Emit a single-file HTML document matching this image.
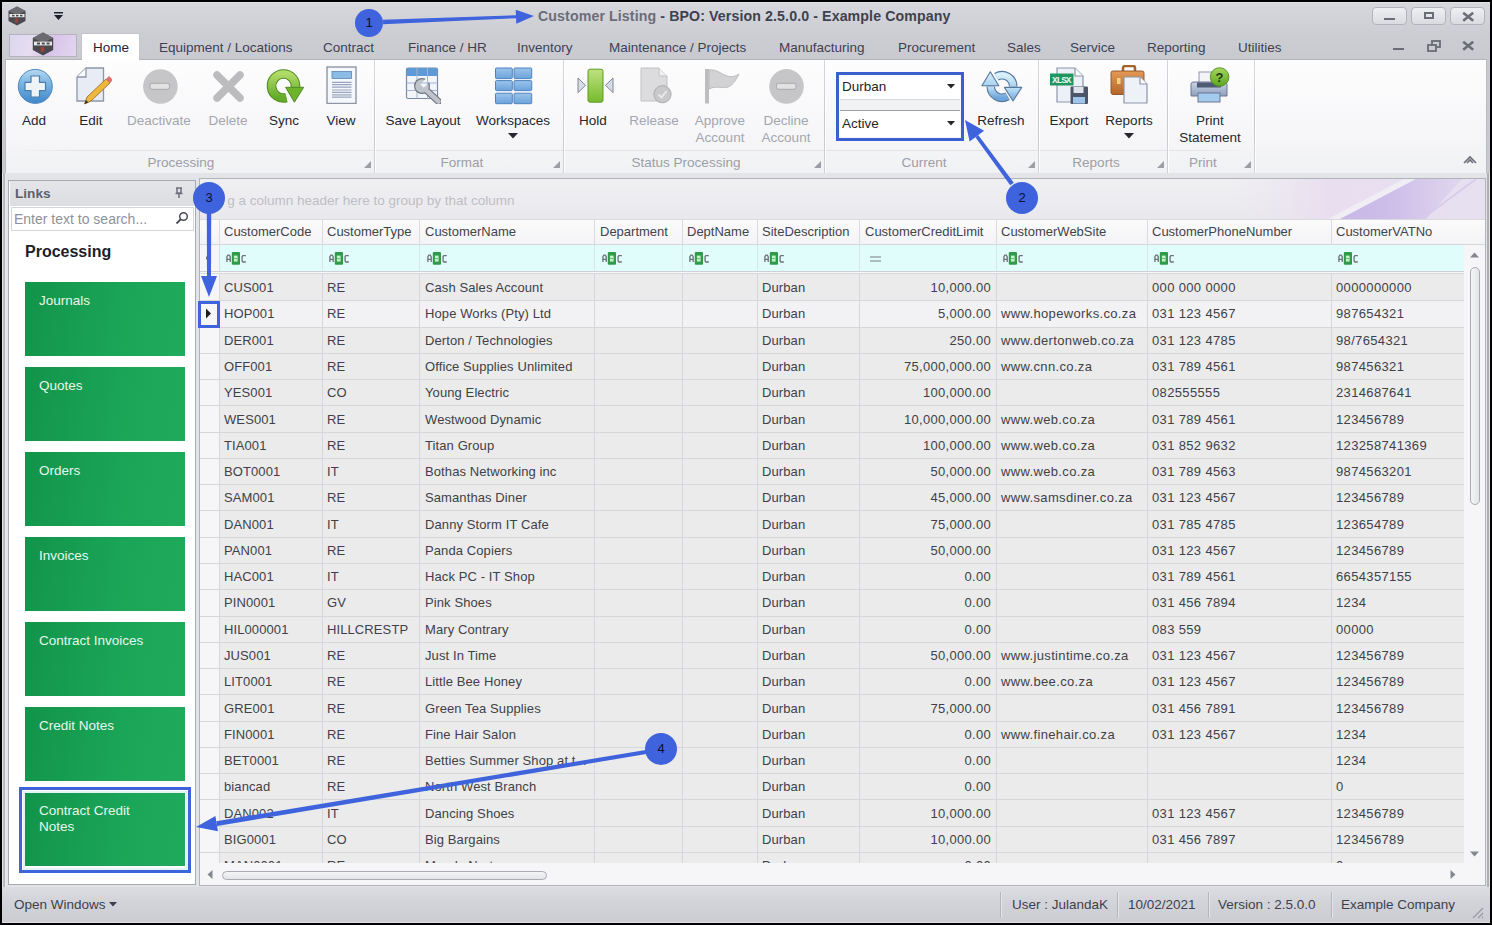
<!DOCTYPE html><html><head><meta charset="utf-8"><style>
*{margin:0;padding:0;box-sizing:border-box}
html,body{width:1492px;height:925px;overflow:hidden;background:#000;font-family:"Liberation Sans",sans-serif}
div,span,svg{position:absolute}
.t{white-space:nowrap;line-height:1}
.tab{top:41px;font-size:13.5px;color:#3d4152}
.rl{font-size:13.5px;color:#25272f;text-align:center;line-height:17px;white-space:nowrap}
.dis{color:#a3a6b0}
.gl{top:156px;font-size:13.5px;color:#9c9ea7;white-space:nowrap;line-height:1}
.gsep{top:60px;width:1px;height:113px;background:linear-gradient(#d5d6db,#c8c9cf 50%,#d0d1d6);box-shadow:1px 0 0 #fff}
.tile{left:25px;width:160px;height:74px;background:linear-gradient(100deg,#12944a,#1aa457 55%,#20ab5c);color:#e8f7ec;font-size:13.5px;padding:11px 0 0 14px;line-height:16px}
.c{font-size:13px;color:#404148;white-space:nowrap;line-height:1}
.hc{font-size:13px;color:#42434c;white-space:nowrap;line-height:1}
.sb{font-size:13.5px;color:#3c3f4e;white-space:nowrap;line-height:1}
</style></head><body>
<div style="left:2px;top:2px;width:1488px;height:921px;background:linear-gradient(#d7d8dd,#cdced4 30px,#c9cad0 56px,#c9cad0)"></div>
<div style="left:2px;top:2px;width:1488px;height:1px;background:#e4e5e8"></div>
<svg style="left:7px;top:6px" width="20" height="20" viewBox="0 0 20 20"><polygon points="10,0.5 18.5,5 18.5,15 10,19.5 1.5,15 1.5,5" fill="#4a4a4e"/><polygon points="10,0.5 18.5,5 10,9 1.5,5" fill="#6c6c70"/><rect x="2.5" y="8" width="15" height="3.2" fill="#e8e8e8"/><rect x="5" y="8.8" width="2.5" height="1.6" fill="#4a4a4e"/><rect x="9" y="8.8" width="2.5" height="1.6" fill="#4a4a4e"/><rect x="13" y="8.8" width="2.5" height="1.6" fill="#4a4a4e"/><rect x="8" y="12.5" width="3" height="4" fill="#a0413a"/></svg>
<svg style="left:53px;top:12px" width="12" height="9"><rect x="1" y="0" width="9" height="1.5" fill="#1e2030"/><polygon points="1,3 10,3 5.5,8" fill="#1e2030"/></svg>
<div class="t" style="left:538px;top:9px;font-size:14.2px;font-weight:bold;color:#3e4150;letter-spacing:0.1px"><span style="position:static;color:#6b6d78">Customer Listing</span> - BPO: Version 2.5.0.0 - Example Company</div>
<div style="left:1372px;top:7px;width:35px;height:18px;border:1px solid #b3b4bb;border-radius:4px;background:linear-gradient(#eeeff2,#dadbe0)"><div style="left:11px;top:10px;width:11px;height:2.2px;background:#6b6d76"></div></div>
<div style="left:1411px;top:7px;width:35px;height:18px;border:1px solid #b3b4bb;border-radius:4px;background:linear-gradient(#eeeff2,#dadbe0)"><div style="left:11.5px;top:3.8px;width:10.5px;height:7.6px;border:2px solid #6b6d76"></div></div>
<div style="left:1450px;top:7px;width:35px;height:18px;border:1px solid #b3b4bb;border-radius:4px;background:linear-gradient(#eeeff2,#dadbe0)"><svg style="left:11px;top:3.5px" width="13" height="10"><path d="M1.2 0.8 L11.2 8.7 M11.2 0.8 L1.2 8.7" stroke="#6b6d76" stroke-width="2.6"/></svg></div>
<div style="left:9px;top:34px;width:68px;height:23px;border:1px solid #b5b3c0;background:linear-gradient(110deg,#dcd6ee,#e6ddf0 35%,#d9c3ea 60%,#e2d6ef)"></div>
<svg style="left:31px;top:32px" width="24" height="24" viewBox="0 0 20 20"><polygon points="10,0.5 18.5,5 18.5,15 10,19.5 1.5,15 1.5,5" fill="#4a4a4e"/><polygon points="10,0.5 18.5,5 10,9 1.5,5" fill="#6c6c70"/><rect x="2.5" y="8" width="15" height="3.2" fill="#e8e8e8"/><rect x="5" y="8.8" width="2.5" height="1.6" fill="#4a4a4e"/><rect x="9" y="8.8" width="2.5" height="1.6" fill="#4a4a4e"/><rect x="13" y="8.8" width="2.5" height="1.6" fill="#4a4a4e"/><rect x="8" y="12.5" width="3" height="4" fill="#a0413a"/></svg>
<div style="left:81px;top:33px;width:59px;height:28px;background:#fff;border:1px solid #c4c5cb;border-bottom:none;border-radius:2px 2px 0 0"></div>
<div class="t tab" style="left:93px;color:#1f2233">Home</div>
<div class="t tab" style="left:159px">Equipment / Locations</div>
<div class="t tab" style="left:323px">Contract</div>
<div class="t tab" style="left:408px">Finance / HR</div>
<div class="t tab" style="left:517px">Inventory</div>
<div class="t tab" style="left:609px">Maintenance / Projects</div>
<div class="t tab" style="left:779px">Manufacturing</div>
<div class="t tab" style="left:898px">Procurement</div>
<div class="t tab" style="left:1007px">Sales</div>
<div class="t tab" style="left:1070px">Service</div>
<div class="t tab" style="left:1147px">Reporting</div>
<div class="t tab" style="left:1238px">Utilities</div>
<div style="left:1393px;top:47.5px;width:11px;height:2.2px;background:#6b6d76"></div>
<svg style="left:1427px;top:40px" width="14" height="12"><rect x="5" y="1" width="8" height="6" fill="none" stroke="#6b6d76" stroke-width="1.8"/><rect x="1" y="5" width="8" height="6" fill="#cbccd2" stroke="#6b6d76" stroke-width="1.8"/></svg>
<svg style="left:1462px;top:41px" width="13" height="10"><path d="M1.2 0.8 L11.2 8.7 M11.2 0.8 L1.2 8.7" stroke="#6b6d76" stroke-width="2.6"/></svg>
<div style="left:5px;top:59px;width:1482px;height:115px;background:linear-gradient(#fdfdfe,#f6f6f8 70%,#f0f1f3);border:1px solid #b9bac0;border-bottom:1.5px solid #a6a7ac;border-top-color:#b4b5bb"></div>
<div style="left:14px;top:150px;width:1240px;height:1px;background:linear-gradient(90deg,rgba(220,221,226,0),#e2e3e7 5%,#e2e3e7 95%,rgba(220,221,226,0))"></div>
<div style="left:82px;top:57px;width:57px;height:4px;background:#fff"></div>
<div class="gsep" style="left:374px"></div>
<div class="gsep" style="left:563px"></div>
<div class="gsep" style="left:824px"></div>
<div class="gsep" style="left:1038px"></div>
<div class="gsep" style="left:1167px"></div>
<div class="gsep" style="left:1254px"></div>
<div class="gl" style="left:81px;width:200px;text-align:center">Processing</div>
<div class="gl" style="left:362px;width:200px;text-align:center">Format</div>
<div class="gl" style="left:586px;width:200px;text-align:center">Status Processing</div>
<div class="gl" style="left:824px;width:200px;text-align:center">Current</div>
<div class="gl" style="left:996px;width:200px;text-align:center">Reports</div>
<div class="gl" style="left:1103px;width:200px;text-align:center">Print</div>
<svg style="left:364px;top:161px" width="8" height="8"><polygon points="7,0 7,7 0,7" fill="#9c9ea6"/></svg>
<svg style="left:553px;top:161px" width="8" height="8"><polygon points="7,0 7,7 0,7" fill="#9c9ea6"/></svg>
<svg style="left:814px;top:161px" width="8" height="8"><polygon points="7,0 7,7 0,7" fill="#9c9ea6"/></svg>
<svg style="left:1028px;top:161px" width="8" height="8"><polygon points="7,0 7,7 0,7" fill="#9c9ea6"/></svg>
<svg style="left:1157px;top:161px" width="8" height="8"><polygon points="7,0 7,7 0,7" fill="#9c9ea6"/></svg>
<svg style="left:1244px;top:161px" width="8" height="8"><polygon points="7,0 7,7 0,7" fill="#9c9ea6"/></svg>
<svg style="left:1462px;top:153px" width="16" height="12"><path d="M2 10 L8 4 L14 10 M5 10 L8 7 L11 10" stroke="#6a6c76" stroke-width="1.6" fill="none"/></svg>
<div class="rl" style="left:-26px;top:112px;width:120px">Add</div>
<div class="rl" style="left:31px;top:112px;width:120px">Edit</div>
<div class="rl dis" style="left:99px;top:112px;width:120px">Deactivate</div>
<div class="rl dis" style="left:168px;top:112px;width:120px">Delete</div>
<div class="rl" style="left:224px;top:112px;width:120px">Sync</div>
<div class="rl" style="left:281px;top:112px;width:120px">View</div>
<div class="rl" style="left:363px;top:112px;width:120px">Save Layout</div>
<div class="rl" style="left:453px;top:112px;width:120px">Workspaces</div>
<div class="rl" style="left:533px;top:112px;width:120px">Hold</div>
<div class="rl dis" style="left:594px;top:112px;width:120px">Release</div>
<div class="rl dis" style="left:660px;top:112px;width:120px">Approve<br>Account</div>
<div class="rl dis" style="left:726px;top:112px;width:120px">Decline<br>Account</div>
<div class="rl" style="left:941px;top:112px;width:120px">Refresh</div>
<div class="rl" style="left:1009px;top:112px;width:120px">Export</div>
<div class="rl" style="left:1069px;top:112px;width:120px">Reports</div>
<div class="rl" style="left:1150px;top:112px;width:120px">Print<br>Statement</div>
<svg style="left:508px;top:132.5px" width="10" height="6"><polygon points="0,0 10,0 5,5.5" fill="#25272f"/></svg>
<svg style="left:1124px;top:132.5px" width="10" height="6"><polygon points="0,0 10,0 5,5.5" fill="#25272f"/></svg>
<svg style="left:17px;top:68px" width="37" height="37" viewBox="0 0 37 37"><defs><linearGradient id="gAdd" x1="0" y1="0" x2="0" y2="1"><stop offset="0" stop-color="#b6d8ef"/><stop offset="0.5" stop-color="#6eaee0"/><stop offset="1" stop-color="#3f86c8"/></linearGradient></defs><circle cx="18.3" cy="18.4" r="17" fill="url(#gAdd)" stroke="#4f86bd" stroke-width="1"/><path d="M14 8 H22.5 V14.3 H28.5 V22.7 H22.5 V29 H14 V22.7 H8 V14.3 H14 Z" fill="#eef3f8" stroke="#4a7cae" stroke-width="1.2" stroke-linejoin="round"/></svg>
<svg style="left:75px;top:66px" width="37" height="40" viewBox="0 0 37 40"><path d="M2 11 L11 2 H28.5 V35 H2 Z" fill="#e7ecf5" stroke="#8d95a8" stroke-width="1.3"/><path d="M2 11 H11 V2" fill="#fbfcfe" stroke="#8d95a8" stroke-width="1.3"/><path d="M9.5 38 L12 31 L31 13 L35 17 L16 35 Z" fill="#f1b73c" stroke="#8a6a2a" stroke-width="0.8"/><path d="M31 13 L34 10 L38 14 L35 17 Z" fill="#e2706e"/><path d="M9.5 38 L11 34 L13.5 36.5 Z" fill="#333"/></svg>
<svg style="left:142px;top:68px" width="37" height="37" viewBox="0 0 37 37"><circle cx="18.4" cy="18.5" r="17.3" fill="#c6c6c8"/><rect x="8" y="15.3" width="19.5" height="6" rx="2" fill="#e2e2e3" stroke="#a9a9ab" stroke-width="1"/></svg>
<svg style="left:212px;top:70px" width="34" height="34" viewBox="0 0 34 34"><path d="M5 5 L28 28 M28 5 L5 28" stroke="#bcbcbe" stroke-width="7.5" stroke-linecap="round"/></svg>
<svg style="left:265px;top:68px" width="40" height="37" viewBox="0 0 40 37"><defs><linearGradient id="gSync" x1="0" y1="0" x2="0" y2="1"><stop offset="0" stop-color="#b0db66"/><stop offset="1" stop-color="#62aa28"/></linearGradient></defs><path d="M21.4 29.6 A12 12 0 1 1 30.4 19.5" fill="none" stroke="#4f8a22" stroke-width="9.6"/><path d="M21.4 29.6 A12 12 0 1 1 30.4 19.5" fill="none" stroke="url(#gSync)" stroke-width="7.6"/><polygon points="20.6,19.3 38.7,19.3 29.4,34.2" fill="#6db42c" stroke="#4f8a22" stroke-width="1" stroke-linejoin="round"/></svg>
<svg style="left:326px;top:66px" width="31" height="38" viewBox="0 0 31 38"><rect x="1" y="1" width="29" height="36.5" fill="#f4f7fb" stroke="#8e96a6" stroke-width="1.4"/><rect x="6" y="5.5" width="19.5" height="7" fill="#8cbce6" stroke="#5a86b6" stroke-width="0.8"/><path d="M6 16.3 H25.5 M6 18.7 H25.5 M6 21.1 H25.5 M6 24 H25.5 M6 26.4 H25.5 M6 28.8 H25.5 M6 31.2 H25.5" stroke="#98a3bd" stroke-width="1.2"/></svg>
<svg style="left:405px;top:67px" width="40" height="40" viewBox="0 0 40 40"><defs><mask id="mWr"><rect x="0" y="0" width="40" height="40" fill="#fff"/><polygon points="15.2,17.2 18.8,20.8 27,12.6 23.4,9" fill="#000"/></mask></defs><rect x="1.5" y="1" width="31" height="30.5" rx="1.5" fill="#f2f6fb" stroke="#7d8aa5" stroke-width="1.2"/><rect x="1.5" y="1" width="31" height="8" rx="1.5" fill="#5d9ad6"/><path d="M12 1 V31.5 M22.5 1 V31.5 M1.5 16 H32.5 M1.5 23.5 H32.5" stroke="#a3b4cc" stroke-width="1"/><g mask="url(#mWr)"><path d="M19 21 L33.5 34.5" stroke="#6f7480" stroke-width="7" stroke-linecap="round"/><circle cx="17" cy="19" r="8" fill="#6f7480"/><path d="M19 21 L33.5 34.5" stroke="#bfc4cc" stroke-width="4.6" stroke-linecap="round"/><circle cx="17" cy="19" r="6.8" fill="#bfc4cc"/></g></svg>
<svg style="left:494px;top:67px" width="39" height="38" viewBox="0 0 39 38"><defs><linearGradient id="gWs" x1="0" y1="0" x2="0" y2="1"><stop offset="0" stop-color="#9cc4ea"/><stop offset="1" stop-color="#6aa3dc"/></linearGradient></defs><rect x="1.5" y="1.0" width="16.8" height="10.6" rx="1" fill="url(#gWs)" stroke="#4d83bd" stroke-width="1"/><rect x="20.0" y="1.0" width="17.7" height="10.6" rx="1" fill="url(#gWs)" stroke="#4d83bd" stroke-width="1"/><rect x="1.5" y="13.6" width="16.8" height="10.0" rx="1" fill="url(#gWs)" stroke="#4d83bd" stroke-width="1"/><rect x="20.0" y="13.6" width="17.7" height="10.0" rx="1" fill="url(#gWs)" stroke="#4d83bd" stroke-width="1"/><rect x="1.5" y="26.2" width="16.8" height="10.5" rx="1" fill="url(#gWs)" stroke="#4d83bd" stroke-width="1"/><rect x="20.0" y="26.2" width="17.7" height="10.5" rx="1" fill="url(#gWs)" stroke="#4d83bd" stroke-width="1"/></svg>
<svg style="left:576px;top:68px" width="39" height="36" viewBox="0 0 39 36"><defs><linearGradient id="gHold" x1="0" y1="0" x2="0" y2="1"><stop offset="0" stop-color="#bde27e"/><stop offset="1" stop-color="#78ba2e"/></linearGradient></defs><rect x="12" y="1.2" width="15" height="33" rx="2" fill="url(#gHold)" stroke="#5f9a24" stroke-width="1"/><polygon points="2,10 9.5,17.3 2,24.6" fill="#d7dce6" stroke="#7c8699" stroke-width="1"/><polygon points="37,10 29.5,17.3 37,24.6" fill="#d7dce6" stroke="#7c8699" stroke-width="1"/></svg>
<svg style="left:640px;top:67px" width="36" height="37" viewBox="0 0 36 37"><path d="M1 1 H19 L27 9 V34 H1 Z" fill="#dcdcde" stroke="#c2c2c4" stroke-width="1"/><path d="M19 1 V9 H27" fill="#f0f0f1" stroke="#c2c2c4" stroke-width="1"/><circle cx="22.5" cy="27.2" r="8.6" fill="#c8c8ca" stroke="#adadaf" stroke-width="1"/><path d="M18.5 27.5 L21.5 30.5 L26.5 24" stroke="#e8e8e9" stroke-width="2" fill="none"/></svg>
<svg style="left:703px;top:68px" width="38" height="37" viewBox="0 0 38 37"><rect x="2" y="1" width="4" height="34.5" fill="#bdbdbf"/><path d="M6 2 C14 1 18 6 24 8 C29 9.5 33 8 36 6 C33 12 30 17 25 19 C19 21 14 17 6 21 Z" fill="#d2d2d4" stroke="#bdbdbf" stroke-width="1"/></svg>
<svg style="left:768px;top:68px" width="37" height="37" viewBox="0 0 37 37"><circle cx="18.5" cy="18.4" r="17.3" fill="#c6c6c8"/><rect x="8.5" y="15.3" width="19.5" height="6" rx="2" fill="#e2e2e3" stroke="#a9a9ab" stroke-width="1"/></svg>
<svg style="left:980px;top:70px" width="44" height="34" viewBox="0 0 44 34"><defs><linearGradient id="gRf" x1="0" y1="0" x2="0" y2="1"><stop offset="0" stop-color="#d8f0fb"/><stop offset="1" stop-color="#a9d2f0"/></linearGradient><linearGradient id="gRf2" x1="0" y1="0" x2="0" y2="1"><stop offset="0" stop-color="#c2e2f7"/><stop offset="1" stop-color="#6ea6dc"/></linearGradient></defs><path d="M16.4 6.8 A11.2 11.2 0 0 1 33.2 16.5" fill="none" stroke="#56789c" stroke-width="8.6"/><path d="M10.8 16.5 A11.2 11.2 0 0 0 27.6 26.2" fill="none" stroke="#56789c" stroke-width="8.6"/><path d="M16.4 6.8 A11.2 11.2 0 0 1 33.2 16.5" fill="none" stroke="url(#gRf)" stroke-width="6.4"/><path d="M10.8 16.5 A11.2 11.2 0 0 0 27.6 26.2" fill="none" stroke="url(#gRf2)" stroke-width="6.4"/><polygon points="24.4,17.4 41.7,17.4 33,31" fill="url(#gRf2)" stroke="#56789c" stroke-width="1.1" stroke-linejoin="round"/><polygon points="1.9,15.7 18.8,15.7 10.3,1.8" fill="url(#gRf)" stroke="#56789c" stroke-width="1.1" stroke-linejoin="round"/></svg>
<svg style="left:1048px;top:66px" width="42" height="39" viewBox="0 0 42 39"><path d="M9 2 H27 L35 10 V36 H9 Z" fill="#edf1f7" stroke="#8d95a8" stroke-width="1.2"/><path d="M27 2 V10 H35" fill="#fafbfd" stroke="#8d95a8" stroke-width="1.2"/><rect x="2" y="7.5" width="23.5" height="12" fill="#1f9560"/><text x="4" y="17" font-family="Liberation Mono" font-size="9.5" font-weight="bold" fill="#e9f6ee" textLength="19.5">XLSX</text><rect x="22.5" y="20.5" width="17.5" height="17.5" rx="1" fill="#4d5668"/><rect x="25.5" y="21" width="10" height="6" fill="#dfe4ec"/><rect x="25" y="31" width="12" height="6.5" fill="#9fc6ea"/></svg>
<svg style="left:1109px;top:65px" width="40" height="40" viewBox="0 0 40 40"><defs><linearGradient id="gBc" x1="0" y1="0" x2="0" y2="1"><stop offset="0" stop-color="#e39a55"/><stop offset="1" stop-color="#b5662b"/></linearGradient></defs><path d="M14 6 V3 A2 2 0 0 1 16 1 H24 A2 2 0 0 1 26 3 V6" fill="none" stroke="#a5622b" stroke-width="2.5"/><rect x="2" y="6" width="33" height="23.5" rx="2" fill="url(#gBc)" stroke="#8c5024" stroke-width="0.9"/><rect x="8" y="13" width="3.5" height="6" fill="#f1d27a"/><path d="M15 12 H31 L38 19 V38 H15 Z" fill="#eef1f7" stroke="#8d95a8" stroke-width="1.2"/><path d="M31 12 V19 H38" fill="#fafbfd" stroke="#8d95a8" stroke-width="1.2"/></svg>
<svg style="left:1190px;top:66px" width="40" height="40" viewBox="0 0 40 40"><defs><linearGradient id="gPr" x1="0" y1="0" x2="0" y2="1"><stop offset="0" stop-color="#c9d4e6"/><stop offset="1" stop-color="#8e9fbd"/></linearGradient><linearGradient id="gQ" x1="0" y1="0" x2="0" y2="1"><stop offset="0" stop-color="#a6d65c"/><stop offset="1" stop-color="#5ea624"/></linearGradient></defs><rect x="9" y="6" width="20" height="14" fill="#f2f4f8" stroke="#8d95a8" stroke-width="1"/><path d="M3 16 H35 A2.5 2.5 0 0 1 37 18.5 V30 H1 V18.5 A2.5 2.5 0 0 1 3 16 Z" fill="url(#gPr)" stroke="#6c7791" stroke-width="1"/><rect x="7" y="16.5" width="24" height="5" fill="#4f5b72"/><rect x="8" y="27" width="22" height="9" fill="#a3cbee" stroke="#6c7791" stroke-width="1"/><circle cx="29.6" cy="11" r="9.3" fill="url(#gQ)" stroke="#4e8d1f" stroke-width="0.9"/><text x="29.6" y="15.5" text-anchor="middle" font-family="Liberation Sans" font-size="13" font-weight="bold" fill="#223311">?</text></svg>
<div style="left:836px;top:72px;width:128px;height:69px;border:3.5px solid #3b5fcf"></div>
<div style="left:840px;top:76px;width:120px;height:24px;background:#fff;border-bottom:1px solid #d9dadf"></div>
<div style="left:840px;top:100px;width:120px;height:10px;background:#f1f2f4"></div>
<div style="left:840px;top:110px;width:120px;height:27px;background:#fff;border-top:1.5px solid #9d9fa6"></div>
<div class="t" style="left:842px;top:80px;font-size:13.5px;color:#23252d">Durban</div>
<div class="t" style="left:842px;top:117px;font-size:13.5px;color:#23252d">Active</div>
<svg style="left:947px;top:84px" width="9" height="5"><polygon points="0,0 8,0 4,4.5" fill="#23252d"/></svg>
<svg style="left:947px;top:121px" width="9" height="5"><polygon points="0,0 8,0 4,4.5" fill="#23252d"/></svg>
<div style="left:2px;top:173px;width:1488px;height:714px;background:#e3e4e8"></div>
<div style="left:3px;top:173px;width:1.5px;height:714px;background:#b9babf"></div>
<div style="left:1487px;top:173px;width:1.5px;height:714px;background:#aeafb4"></div>
<div style="left:8px;top:180px;width:188px;height:705px;background:#fff;border:1px solid #a9aaaf"></div>
<div style="left:10px;top:181px;width:185px;height:25px;background:linear-gradient(#e4e5e9,#dcdde1)"></div>
<div class="t" style="left:15px;top:187px;font-size:13.6px;font-weight:bold;color:#5d606c">Links</div>
<svg style="left:174px;top:187px" width="10" height="12"><path d="M2 1 H8 M3 1 V6 H7 V1 M1.5 6.5 H8.5 M5 6.5 V11" stroke="#6d6f7a" stroke-width="1.5" fill="none"/></svg>
<div style="left:11px;top:207px;width:183px;height:24px;background:#fff;border:1px solid #d4d5da"></div>
<div class="t" style="left:14px;top:212px;font-size:14px;color:#8f919a">Enter text to search...</div>
<svg style="left:175px;top:211px" width="14" height="14"><circle cx="8.5" cy="5.5" r="3.8" stroke="#4a4c56" stroke-width="1.5" fill="none"/><path d="M6 8 L1.5 12.5" stroke="#4a4c56" stroke-width="1.8"/></svg>
<div class="t" style="left:25px;top:244px;font-size:16px;font-weight:bold;color:#1d1f2a">Processing</div>
<div class="tile" style="top:282px">Journals</div>
<div class="tile" style="top:367px">Quotes</div>
<div class="tile" style="top:452px">Orders</div>
<div class="tile" style="top:537px">Invoices</div>
<div class="tile" style="top:622px">Contract Invoices</div>
<div class="tile" style="top:707px">Credit Notes</div>
<div class="tile" style="top:792px">Contract Credit<br>Notes</div>
<div style="left:199px;top:178px;width:1287px;height:708px;background:#f5f5f7;border:1px solid #b2b3b9"></div>
<div style="left:200px;top:179px;width:1285px;height:40px;background:linear-gradient(#f0f0f3,#e9e9ed)"></div>
<svg style="left:1200px;top:179px" width="285" height="40" viewBox="0 0 285 40"><defs><linearGradient id="pg" x1="0" y1="0" x2="285" y2="0" gradientUnits="userSpaceOnUse"><stop offset="0.1" stop-color="#ebe6f0" stop-opacity="0"/><stop offset="0.45" stop-color="#e9def0"/><stop offset="1" stop-color="#e6e0f0"/></linearGradient><linearGradient id="pb" x1="140" y1="0" x2="262" y2="0" gradientUnits="userSpaceOnUse"><stop offset="0" stop-color="#c8b7e6"/><stop offset="0.4" stop-color="#cdbde9"/><stop offset="1" stop-color="#e0d7ee"/></linearGradient></defs><rect x="0" y="0" width="285" height="40" fill="url(#pg)"/><polygon points="128,40 204,0 216,0 140,40" fill="#f0eef4"/><polygon points="140,40 216,0 262,0 226,40" fill="url(#pb)"/><path d="M222 40 L276 0" stroke="#d6cbea" stroke-width="1.6"/></svg>
<div class="t" style="left:227.2px;top:193.5px;font-size:13.5px;color:#bdbec5">g a column header here to group by that column</div>
<div style="left:200px;top:219px;width:1285px;height:26px;background:linear-gradient(#fbfbfc,#f4f4f6);border-top:1px solid #d9dade;border-bottom:1px solid #d6d7dc"></div>
<div style="left:219px;top:220px;width:1px;height:25px;background:#dadbe0"></div>
<div style="left:322px;top:220px;width:1px;height:25px;background:#dadbe0"></div>
<div style="left:419px;top:220px;width:1px;height:25px;background:#dadbe0"></div>
<div style="left:594px;top:220px;width:1px;height:25px;background:#dadbe0"></div>
<div style="left:682px;top:220px;width:1px;height:25px;background:#dadbe0"></div>
<div style="left:757px;top:220px;width:1px;height:25px;background:#dadbe0"></div>
<div style="left:859px;top:220px;width:1px;height:25px;background:#dadbe0"></div>
<div style="left:996px;top:220px;width:1px;height:25px;background:#dadbe0"></div>
<div style="left:1147px;top:220px;width:1px;height:25px;background:#dadbe0"></div>
<div style="left:1331px;top:220px;width:1px;height:25px;background:#dadbe0"></div>
<div class="t hc" style="left:224px;top:225.2px">CustomerCode</div>
<div class="t hc" style="left:327px;top:225.2px">CustomerType</div>
<div class="t hc" style="left:425px;top:225.2px">CustomerName</div>
<div class="t hc" style="left:600px;top:225.2px">Department</div>
<div class="t hc" style="left:687px;top:225.2px">DeptName</div>
<div class="t hc" style="left:762px;top:225.2px">SiteDescription</div>
<div class="t hc" style="left:865px;top:225.2px">CustomerCreditLimit</div>
<div class="t hc" style="left:1001px;top:225.2px">CustomerWebSite</div>
<div class="t hc" style="left:1152px;top:225.2px">CustomerPhoneNumber</div>
<div class="t hc" style="left:1336px;top:225.2px">CustomerVATNo</div>
<div style="left:200px;top:245px;width:1264px;height:26px;background:#e0fcfb"></div>
<div style="left:200px;top:245px;width:19px;height:26px;background:#f6f6f8"></div>
<div style="left:1464px;top:245px;width:21px;height:26px;background:#f6f6f8"></div>
<div style="left:219px;top:245px;width:1px;height:26px;background:#d8e6e6"></div>
<div style="left:322px;top:245px;width:1px;height:26px;background:#d8e6e6"></div>
<div style="left:419px;top:245px;width:1px;height:26px;background:#d8e6e6"></div>
<div style="left:594px;top:245px;width:1px;height:26px;background:#d8e6e6"></div>
<div style="left:682px;top:245px;width:1px;height:26px;background:#d8e6e6"></div>
<div style="left:757px;top:245px;width:1px;height:26px;background:#d8e6e6"></div>
<div style="left:859px;top:245px;width:1px;height:26px;background:#d8e6e6"></div>
<div style="left:996px;top:245px;width:1px;height:26px;background:#d8e6e6"></div>
<div style="left:1147px;top:245px;width:1px;height:26px;background:#d8e6e6"></div>
<div style="left:219px;top:245px;width:1px;height:26px;background:#dadbe0"></div>
<svg style="left:226px;top:251px" width="21" height="15" viewBox="0 0 21 15"><path d="M0.9 11 V5.6 L1.9 4.2 H3.2 L4.2 5.6 V11 M0.9 8.3 H4.2" stroke="#6b7077" stroke-width="1.3" fill="none"/><rect x="5.8" y="1" width="8.2" height="12.8" rx="1" fill="#2f9b4a"/><path d="M7.9 4.6 H11.6 V10.6 H7.9 Z" fill="#c6f2c9"/><path d="M8 7.6 H11" stroke="#5fb06f" stroke-width="0.9"/><path d="M19.8 4.6 H16.9 L16.1 5.5 V10.1 L16.9 11 H19.8" stroke="#6b7077" stroke-width="1.3" fill="none"/></svg>
<svg style="left:329px;top:251px" width="21" height="15" viewBox="0 0 21 15"><path d="M0.9 11 V5.6 L1.9 4.2 H3.2 L4.2 5.6 V11 M0.9 8.3 H4.2" stroke="#6b7077" stroke-width="1.3" fill="none"/><rect x="5.8" y="1" width="8.2" height="12.8" rx="1" fill="#2f9b4a"/><path d="M7.9 4.6 H11.6 V10.6 H7.9 Z" fill="#c6f2c9"/><path d="M8 7.6 H11" stroke="#5fb06f" stroke-width="0.9"/><path d="M19.8 4.6 H16.9 L16.1 5.5 V10.1 L16.9 11 H19.8" stroke="#6b7077" stroke-width="1.3" fill="none"/></svg>
<svg style="left:427px;top:251px" width="21" height="15" viewBox="0 0 21 15"><path d="M0.9 11 V5.6 L1.9 4.2 H3.2 L4.2 5.6 V11 M0.9 8.3 H4.2" stroke="#6b7077" stroke-width="1.3" fill="none"/><rect x="5.8" y="1" width="8.2" height="12.8" rx="1" fill="#2f9b4a"/><path d="M7.9 4.6 H11.6 V10.6 H7.9 Z" fill="#c6f2c9"/><path d="M8 7.6 H11" stroke="#5fb06f" stroke-width="0.9"/><path d="M19.8 4.6 H16.9 L16.1 5.5 V10.1 L16.9 11 H19.8" stroke="#6b7077" stroke-width="1.3" fill="none"/></svg>
<svg style="left:602px;top:251px" width="21" height="15" viewBox="0 0 21 15"><path d="M0.9 11 V5.6 L1.9 4.2 H3.2 L4.2 5.6 V11 M0.9 8.3 H4.2" stroke="#6b7077" stroke-width="1.3" fill="none"/><rect x="5.8" y="1" width="8.2" height="12.8" rx="1" fill="#2f9b4a"/><path d="M7.9 4.6 H11.6 V10.6 H7.9 Z" fill="#c6f2c9"/><path d="M8 7.6 H11" stroke="#5fb06f" stroke-width="0.9"/><path d="M19.8 4.6 H16.9 L16.1 5.5 V10.1 L16.9 11 H19.8" stroke="#6b7077" stroke-width="1.3" fill="none"/></svg>
<svg style="left:689px;top:251px" width="21" height="15" viewBox="0 0 21 15"><path d="M0.9 11 V5.6 L1.9 4.2 H3.2 L4.2 5.6 V11 M0.9 8.3 H4.2" stroke="#6b7077" stroke-width="1.3" fill="none"/><rect x="5.8" y="1" width="8.2" height="12.8" rx="1" fill="#2f9b4a"/><path d="M7.9 4.6 H11.6 V10.6 H7.9 Z" fill="#c6f2c9"/><path d="M8 7.6 H11" stroke="#5fb06f" stroke-width="0.9"/><path d="M19.8 4.6 H16.9 L16.1 5.5 V10.1 L16.9 11 H19.8" stroke="#6b7077" stroke-width="1.3" fill="none"/></svg>
<svg style="left:764px;top:251px" width="21" height="15" viewBox="0 0 21 15"><path d="M0.9 11 V5.6 L1.9 4.2 H3.2 L4.2 5.6 V11 M0.9 8.3 H4.2" stroke="#6b7077" stroke-width="1.3" fill="none"/><rect x="5.8" y="1" width="8.2" height="12.8" rx="1" fill="#2f9b4a"/><path d="M7.9 4.6 H11.6 V10.6 H7.9 Z" fill="#c6f2c9"/><path d="M8 7.6 H11" stroke="#5fb06f" stroke-width="0.9"/><path d="M19.8 4.6 H16.9 L16.1 5.5 V10.1 L16.9 11 H19.8" stroke="#6b7077" stroke-width="1.3" fill="none"/></svg>
<svg style="left:870px;top:255.5px" width="12" height="6"><path d="M0 1 H11 M0 5 H11" stroke="#7a7d84" stroke-width="1.2"/></svg>
<svg style="left:1003px;top:251px" width="21" height="15" viewBox="0 0 21 15"><path d="M0.9 11 V5.6 L1.9 4.2 H3.2 L4.2 5.6 V11 M0.9 8.3 H4.2" stroke="#6b7077" stroke-width="1.3" fill="none"/><rect x="5.8" y="1" width="8.2" height="12.8" rx="1" fill="#2f9b4a"/><path d="M7.9 4.6 H11.6 V10.6 H7.9 Z" fill="#c6f2c9"/><path d="M8 7.6 H11" stroke="#5fb06f" stroke-width="0.9"/><path d="M19.8 4.6 H16.9 L16.1 5.5 V10.1 L16.9 11 H19.8" stroke="#6b7077" stroke-width="1.3" fill="none"/></svg>
<svg style="left:1154px;top:251px" width="21" height="15" viewBox="0 0 21 15"><path d="M0.9 11 V5.6 L1.9 4.2 H3.2 L4.2 5.6 V11 M0.9 8.3 H4.2" stroke="#6b7077" stroke-width="1.3" fill="none"/><rect x="5.8" y="1" width="8.2" height="12.8" rx="1" fill="#2f9b4a"/><path d="M7.9 4.6 H11.6 V10.6 H7.9 Z" fill="#c6f2c9"/><path d="M8 7.6 H11" stroke="#5fb06f" stroke-width="0.9"/><path d="M19.8 4.6 H16.9 L16.1 5.5 V10.1 L16.9 11 H19.8" stroke="#6b7077" stroke-width="1.3" fill="none"/></svg>
<svg style="left:1338px;top:251px" width="21" height="15" viewBox="0 0 21 15"><path d="M0.9 11 V5.6 L1.9 4.2 H3.2 L4.2 5.6 V11 M0.9 8.3 H4.2" stroke="#6b7077" stroke-width="1.3" fill="none"/><rect x="5.8" y="1" width="8.2" height="12.8" rx="1" fill="#2f9b4a"/><path d="M7.9 4.6 H11.6 V10.6 H7.9 Z" fill="#c6f2c9"/><path d="M8 7.6 H11" stroke="#5fb06f" stroke-width="0.9"/><path d="M19.8 4.6 H16.9 L16.1 5.5 V10.1 L16.9 11 H19.8" stroke="#6b7077" stroke-width="1.3" fill="none"/></svg>
<div style="left:206px;top:256px;width:4px;height:4px;border-radius:2px;background:#555"></div>
<div style="left:200px;top:271px;width:1264px;height:3px;background:#f7f7f8;border-top:1px solid #cfd0d4;border-bottom:1px solid #d8d9dd"></div>
<div style="left:200px;top:274px;width:1264px;height:589px;overflow:hidden;background:#ebebeb">
<div style="left:19px;top:0.00px;width:1245px;height:26.77px;background:#ebebeb"></div>
<div style="left:19px;top:26.27px;width:1245px;height:26.77px;background:#f2f2f4"></div>
<div style="left:19px;top:52.54px;width:1245px;height:26.77px;background:#ebebeb"></div>
<div style="left:19px;top:78.81px;width:1245px;height:26.77px;background:#ebebeb"></div>
<div style="left:19px;top:105.08px;width:1245px;height:26.77px;background:#ebebeb"></div>
<div style="left:19px;top:131.35px;width:1245px;height:26.77px;background:#ebebeb"></div>
<div style="left:19px;top:157.62px;width:1245px;height:26.77px;background:#ebebeb"></div>
<div style="left:19px;top:183.89px;width:1245px;height:26.77px;background:#ebebeb"></div>
<div style="left:19px;top:210.16px;width:1245px;height:26.77px;background:#ebebeb"></div>
<div style="left:19px;top:236.43px;width:1245px;height:26.77px;background:#ebebeb"></div>
<div style="left:19px;top:262.70px;width:1245px;height:26.77px;background:#ebebeb"></div>
<div style="left:19px;top:288.97px;width:1245px;height:26.77px;background:#ebebeb"></div>
<div style="left:19px;top:315.24px;width:1245px;height:26.77px;background:#ebebeb"></div>
<div style="left:19px;top:341.51px;width:1245px;height:26.77px;background:#ebebeb"></div>
<div style="left:19px;top:367.78px;width:1245px;height:26.77px;background:#ebebeb"></div>
<div style="left:19px;top:394.05px;width:1245px;height:26.77px;background:#ebebeb"></div>
<div style="left:19px;top:420.32px;width:1245px;height:26.77px;background:#ebebeb"></div>
<div style="left:19px;top:446.59px;width:1245px;height:26.77px;background:#ebebeb"></div>
<div style="left:19px;top:472.86px;width:1245px;height:26.77px;background:#ebebeb"></div>
<div style="left:19px;top:499.13px;width:1245px;height:26.77px;background:#ebebeb"></div>
<div style="left:19px;top:525.40px;width:1245px;height:26.77px;background:#ebebeb"></div>
<div style="left:19px;top:551.67px;width:1245px;height:26.77px;background:#ebebeb"></div>
<div style="left:19px;top:577.94px;width:1245px;height:26.77px;background:#ebebeb"></div>
<div style="left:0px;top:0px;width:19px;height:600px;background:#f6f6f8"></div>
<div style="left:0px;top:26px;width:1264px;height:1px;background:#d6d7db"></div>
<div style="left:0px;top:53px;width:1264px;height:1px;background:#d6d7db"></div>
<div style="left:0px;top:79px;width:1264px;height:1px;background:#d6d7db"></div>
<div style="left:0px;top:105px;width:1264px;height:1px;background:#d6d7db"></div>
<div style="left:0px;top:131px;width:1264px;height:1px;background:#d6d7db"></div>
<div style="left:0px;top:158px;width:1264px;height:1px;background:#d6d7db"></div>
<div style="left:0px;top:184px;width:1264px;height:1px;background:#d6d7db"></div>
<div style="left:0px;top:210px;width:1264px;height:1px;background:#d6d7db"></div>
<div style="left:0px;top:236px;width:1264px;height:1px;background:#d6d7db"></div>
<div style="left:0px;top:263px;width:1264px;height:1px;background:#d6d7db"></div>
<div style="left:0px;top:289px;width:1264px;height:1px;background:#d6d7db"></div>
<div style="left:0px;top:315px;width:1264px;height:1px;background:#d6d7db"></div>
<div style="left:0px;top:342px;width:1264px;height:1px;background:#d6d7db"></div>
<div style="left:0px;top:368px;width:1264px;height:1px;background:#d6d7db"></div>
<div style="left:0px;top:394px;width:1264px;height:1px;background:#d6d7db"></div>
<div style="left:0px;top:420px;width:1264px;height:1px;background:#d6d7db"></div>
<div style="left:0px;top:447px;width:1264px;height:1px;background:#d6d7db"></div>
<div style="left:0px;top:473px;width:1264px;height:1px;background:#d6d7db"></div>
<div style="left:0px;top:499px;width:1264px;height:1px;background:#d6d7db"></div>
<div style="left:0px;top:525px;width:1264px;height:1px;background:#d6d7db"></div>
<div style="left:0px;top:552px;width:1264px;height:1px;background:#d6d7db"></div>
<div style="left:0px;top:578px;width:1264px;height:1px;background:#d6d7db"></div>
<div style="left:0px;top:604px;width:1264px;height:1px;background:#d6d7db"></div>
<div class="t c" style="left:24px;top:7.20px;letter-spacing:0.1px">CUS001</div>
<div class="t c" style="left:127px;top:7.20px;letter-spacing:0.1px">RE</div>
<div class="t c" style="left:225px;top:7.20px;letter-spacing:0.1px">Cash Sales Account</div>
<div class="t c" style="left:562px;top:7.20px;letter-spacing:0.1px">Durban</div>
<div class="t c" style="left:641px;width:150px;text-align:right;top:7.20px;letter-spacing:0.3px">10,000.00</div>
<div class="t c" style="left:952px;top:7.20px;letter-spacing:0.35px">000 000 0000</div>
<div class="t c" style="left:1136px;top:7.20px;letter-spacing:0.35px">0000000000</div>
<div class="t c" style="left:24px;top:33.47px;letter-spacing:0.1px">HOP001</div>
<div class="t c" style="left:127px;top:33.47px;letter-spacing:0.1px">RE</div>
<div class="t c" style="left:225px;top:33.47px;letter-spacing:0.1px">Hope Works (Pty) Ltd</div>
<div class="t c" style="left:562px;top:33.47px;letter-spacing:0.1px">Durban</div>
<div class="t c" style="left:641px;width:150px;text-align:right;top:33.47px;letter-spacing:0.3px">5,000.00</div>
<div class="t c" style="left:801px;top:33.47px;letter-spacing:0.35px">www.hopeworks.co.za</div>
<div class="t c" style="left:952px;top:33.47px;letter-spacing:0.35px">031 123 4567</div>
<div class="t c" style="left:1136px;top:33.47px;letter-spacing:0.35px">987654321</div>
<div class="t c" style="left:24px;top:59.74px;letter-spacing:0.1px">DER001</div>
<div class="t c" style="left:127px;top:59.74px;letter-spacing:0.1px">RE</div>
<div class="t c" style="left:225px;top:59.74px;letter-spacing:0.1px">Derton / Technologies</div>
<div class="t c" style="left:562px;top:59.74px;letter-spacing:0.1px">Durban</div>
<div class="t c" style="left:641px;width:150px;text-align:right;top:59.74px;letter-spacing:0.3px">250.00</div>
<div class="t c" style="left:801px;top:59.74px;letter-spacing:0.35px">www.dertonweb.co.za</div>
<div class="t c" style="left:952px;top:59.74px;letter-spacing:0.35px">031 123 4785</div>
<div class="t c" style="left:1136px;top:59.74px;letter-spacing:0.35px">98/7654321</div>
<div class="t c" style="left:24px;top:86.01px;letter-spacing:0.1px">OFF001</div>
<div class="t c" style="left:127px;top:86.01px;letter-spacing:0.1px">RE</div>
<div class="t c" style="left:225px;top:86.01px;letter-spacing:0.1px">Office Supplies Unlimited</div>
<div class="t c" style="left:562px;top:86.01px;letter-spacing:0.1px">Durban</div>
<div class="t c" style="left:641px;width:150px;text-align:right;top:86.01px;letter-spacing:0.3px">75,000,000.00</div>
<div class="t c" style="left:801px;top:86.01px;letter-spacing:0.35px">www.cnn.co.za</div>
<div class="t c" style="left:952px;top:86.01px;letter-spacing:0.35px">031 789 4561</div>
<div class="t c" style="left:1136px;top:86.01px;letter-spacing:0.35px">987456321</div>
<div class="t c" style="left:24px;top:112.28px;letter-spacing:0.1px">YES001</div>
<div class="t c" style="left:127px;top:112.28px;letter-spacing:0.1px">CO</div>
<div class="t c" style="left:225px;top:112.28px;letter-spacing:0.1px">Young Electric</div>
<div class="t c" style="left:562px;top:112.28px;letter-spacing:0.1px">Durban</div>
<div class="t c" style="left:641px;width:150px;text-align:right;top:112.28px;letter-spacing:0.3px">100,000.00</div>
<div class="t c" style="left:952px;top:112.28px;letter-spacing:0.35px">082555555</div>
<div class="t c" style="left:1136px;top:112.28px;letter-spacing:0.35px">2314687641</div>
<div class="t c" style="left:24px;top:138.55px;letter-spacing:0.1px">WES001</div>
<div class="t c" style="left:127px;top:138.55px;letter-spacing:0.1px">RE</div>
<div class="t c" style="left:225px;top:138.55px;letter-spacing:0.1px">Westwood Dynamic</div>
<div class="t c" style="left:562px;top:138.55px;letter-spacing:0.1px">Durban</div>
<div class="t c" style="left:641px;width:150px;text-align:right;top:138.55px;letter-spacing:0.3px">10,000,000.00</div>
<div class="t c" style="left:801px;top:138.55px;letter-spacing:0.35px">www.web.co.za</div>
<div class="t c" style="left:952px;top:138.55px;letter-spacing:0.35px">031 789 4561</div>
<div class="t c" style="left:1136px;top:138.55px;letter-spacing:0.35px">123456789</div>
<div class="t c" style="left:24px;top:164.82px;letter-spacing:0.1px">TIA001</div>
<div class="t c" style="left:127px;top:164.82px;letter-spacing:0.1px">RE</div>
<div class="t c" style="left:225px;top:164.82px;letter-spacing:0.1px">Titan Group</div>
<div class="t c" style="left:562px;top:164.82px;letter-spacing:0.1px">Durban</div>
<div class="t c" style="left:641px;width:150px;text-align:right;top:164.82px;letter-spacing:0.3px">100,000.00</div>
<div class="t c" style="left:801px;top:164.82px;letter-spacing:0.35px">www.web.co.za</div>
<div class="t c" style="left:952px;top:164.82px;letter-spacing:0.35px">031 852 9632</div>
<div class="t c" style="left:1136px;top:164.82px;letter-spacing:0.35px">123258741369</div>
<div class="t c" style="left:24px;top:191.09px;letter-spacing:0.1px">BOT0001</div>
<div class="t c" style="left:127px;top:191.09px;letter-spacing:0.1px">IT</div>
<div class="t c" style="left:225px;top:191.09px;letter-spacing:0.1px">Bothas Networking inc</div>
<div class="t c" style="left:562px;top:191.09px;letter-spacing:0.1px">Durban</div>
<div class="t c" style="left:641px;width:150px;text-align:right;top:191.09px;letter-spacing:0.3px">50,000.00</div>
<div class="t c" style="left:801px;top:191.09px;letter-spacing:0.35px">www.web.co.za</div>
<div class="t c" style="left:952px;top:191.09px;letter-spacing:0.35px">031 789 4563</div>
<div class="t c" style="left:1136px;top:191.09px;letter-spacing:0.35px">9874563201</div>
<div class="t c" style="left:24px;top:217.36px;letter-spacing:0.1px">SAM001</div>
<div class="t c" style="left:127px;top:217.36px;letter-spacing:0.1px">RE</div>
<div class="t c" style="left:225px;top:217.36px;letter-spacing:0.1px">Samanthas Diner</div>
<div class="t c" style="left:562px;top:217.36px;letter-spacing:0.1px">Durban</div>
<div class="t c" style="left:641px;width:150px;text-align:right;top:217.36px;letter-spacing:0.3px">45,000.00</div>
<div class="t c" style="left:801px;top:217.36px;letter-spacing:0.35px">www.samsdiner.co.za</div>
<div class="t c" style="left:952px;top:217.36px;letter-spacing:0.35px">031 123 4567</div>
<div class="t c" style="left:1136px;top:217.36px;letter-spacing:0.35px">123456789</div>
<div class="t c" style="left:24px;top:243.63px;letter-spacing:0.1px">DAN001</div>
<div class="t c" style="left:127px;top:243.63px;letter-spacing:0.1px">IT</div>
<div class="t c" style="left:225px;top:243.63px;letter-spacing:0.1px">Danny Storm IT Cafe</div>
<div class="t c" style="left:562px;top:243.63px;letter-spacing:0.1px">Durban</div>
<div class="t c" style="left:641px;width:150px;text-align:right;top:243.63px;letter-spacing:0.3px">75,000.00</div>
<div class="t c" style="left:952px;top:243.63px;letter-spacing:0.35px">031 785 4785</div>
<div class="t c" style="left:1136px;top:243.63px;letter-spacing:0.35px">123654789</div>
<div class="t c" style="left:24px;top:269.90px;letter-spacing:0.1px">PAN001</div>
<div class="t c" style="left:127px;top:269.90px;letter-spacing:0.1px">RE</div>
<div class="t c" style="left:225px;top:269.90px;letter-spacing:0.1px">Panda Copiers</div>
<div class="t c" style="left:562px;top:269.90px;letter-spacing:0.1px">Durban</div>
<div class="t c" style="left:641px;width:150px;text-align:right;top:269.90px;letter-spacing:0.3px">50,000.00</div>
<div class="t c" style="left:952px;top:269.90px;letter-spacing:0.35px">031 123 4567</div>
<div class="t c" style="left:1136px;top:269.90px;letter-spacing:0.35px">123456789</div>
<div class="t c" style="left:24px;top:296.17px;letter-spacing:0.1px">HAC001</div>
<div class="t c" style="left:127px;top:296.17px;letter-spacing:0.1px">IT</div>
<div class="t c" style="left:225px;top:296.17px;letter-spacing:0.1px">Hack PC - IT Shop</div>
<div class="t c" style="left:562px;top:296.17px;letter-spacing:0.1px">Durban</div>
<div class="t c" style="left:641px;width:150px;text-align:right;top:296.17px;letter-spacing:0.3px">0.00</div>
<div class="t c" style="left:952px;top:296.17px;letter-spacing:0.35px">031 789 4561</div>
<div class="t c" style="left:1136px;top:296.17px;letter-spacing:0.35px">6654357155</div>
<div class="t c" style="left:24px;top:322.44px;letter-spacing:0.1px">PIN0001</div>
<div class="t c" style="left:127px;top:322.44px;letter-spacing:0.1px">GV</div>
<div class="t c" style="left:225px;top:322.44px;letter-spacing:0.1px">Pink Shoes</div>
<div class="t c" style="left:562px;top:322.44px;letter-spacing:0.1px">Durban</div>
<div class="t c" style="left:641px;width:150px;text-align:right;top:322.44px;letter-spacing:0.3px">0.00</div>
<div class="t c" style="left:952px;top:322.44px;letter-spacing:0.35px">031 456 7894</div>
<div class="t c" style="left:1136px;top:322.44px;letter-spacing:0.35px">1234</div>
<div class="t c" style="left:24px;top:348.71px;letter-spacing:0.1px">HIL000001</div>
<div class="t c" style="left:127px;top:348.71px;letter-spacing:0.1px">HILLCRESTP</div>
<div class="t c" style="left:225px;top:348.71px;letter-spacing:0.1px">Mary Contrary</div>
<div class="t c" style="left:562px;top:348.71px;letter-spacing:0.1px">Durban</div>
<div class="t c" style="left:641px;width:150px;text-align:right;top:348.71px;letter-spacing:0.3px">0.00</div>
<div class="t c" style="left:952px;top:348.71px;letter-spacing:0.35px">083 559</div>
<div class="t c" style="left:1136px;top:348.71px;letter-spacing:0.35px">00000</div>
<div class="t c" style="left:24px;top:374.98px;letter-spacing:0.1px">JUS001</div>
<div class="t c" style="left:127px;top:374.98px;letter-spacing:0.1px">RE</div>
<div class="t c" style="left:225px;top:374.98px;letter-spacing:0.1px">Just In Time</div>
<div class="t c" style="left:562px;top:374.98px;letter-spacing:0.1px">Durban</div>
<div class="t c" style="left:641px;width:150px;text-align:right;top:374.98px;letter-spacing:0.3px">50,000.00</div>
<div class="t c" style="left:801px;top:374.98px;letter-spacing:0.35px">www.justintime.co.za</div>
<div class="t c" style="left:952px;top:374.98px;letter-spacing:0.35px">031 123 4567</div>
<div class="t c" style="left:1136px;top:374.98px;letter-spacing:0.35px">123456789</div>
<div class="t c" style="left:24px;top:401.25px;letter-spacing:0.1px">LIT0001</div>
<div class="t c" style="left:127px;top:401.25px;letter-spacing:0.1px">RE</div>
<div class="t c" style="left:225px;top:401.25px;letter-spacing:0.1px">Little Bee Honey</div>
<div class="t c" style="left:562px;top:401.25px;letter-spacing:0.1px">Durban</div>
<div class="t c" style="left:641px;width:150px;text-align:right;top:401.25px;letter-spacing:0.3px">0.00</div>
<div class="t c" style="left:801px;top:401.25px;letter-spacing:0.35px">www.bee.co.za</div>
<div class="t c" style="left:952px;top:401.25px;letter-spacing:0.35px">031 123 4567</div>
<div class="t c" style="left:1136px;top:401.25px;letter-spacing:0.35px">123456789</div>
<div class="t c" style="left:24px;top:427.52px;letter-spacing:0.1px">GRE001</div>
<div class="t c" style="left:127px;top:427.52px;letter-spacing:0.1px">RE</div>
<div class="t c" style="left:225px;top:427.52px;letter-spacing:0.1px">Green Tea Supplies</div>
<div class="t c" style="left:562px;top:427.52px;letter-spacing:0.1px">Durban</div>
<div class="t c" style="left:641px;width:150px;text-align:right;top:427.52px;letter-spacing:0.3px">75,000.00</div>
<div class="t c" style="left:952px;top:427.52px;letter-spacing:0.35px">031 456 7891</div>
<div class="t c" style="left:1136px;top:427.52px;letter-spacing:0.35px">123456789</div>
<div class="t c" style="left:24px;top:453.79px;letter-spacing:0.1px">FIN0001</div>
<div class="t c" style="left:127px;top:453.79px;letter-spacing:0.1px">RE</div>
<div class="t c" style="left:225px;top:453.79px;letter-spacing:0.1px">Fine Hair Salon</div>
<div class="t c" style="left:562px;top:453.79px;letter-spacing:0.1px">Durban</div>
<div class="t c" style="left:641px;width:150px;text-align:right;top:453.79px;letter-spacing:0.3px">0.00</div>
<div class="t c" style="left:801px;top:453.79px;letter-spacing:0.35px">www.finehair.co.za</div>
<div class="t c" style="left:952px;top:453.79px;letter-spacing:0.35px">031 123 4567</div>
<div class="t c" style="left:1136px;top:453.79px;letter-spacing:0.35px">1234</div>
<div class="t c" style="left:24px;top:480.06px;letter-spacing:0.1px">BET0001</div>
<div class="t c" style="left:127px;top:480.06px;letter-spacing:0.1px">RE</div>
<div class="t c" style="left:225px;top:480.06px;letter-spacing:0.1px">Betties Summer Shop at t...</div>
<div class="t c" style="left:562px;top:480.06px;letter-spacing:0.1px">Durban</div>
<div class="t c" style="left:641px;width:150px;text-align:right;top:480.06px;letter-spacing:0.3px">0.00</div>
<div class="t c" style="left:1136px;top:480.06px;letter-spacing:0.35px">1234</div>
<div class="t c" style="left:24px;top:506.33px;letter-spacing:0.1px">biancad</div>
<div class="t c" style="left:127px;top:506.33px;letter-spacing:0.1px">RE</div>
<div class="t c" style="left:225px;top:506.33px;letter-spacing:0.1px">North West Branch</div>
<div class="t c" style="left:562px;top:506.33px;letter-spacing:0.1px">Durban</div>
<div class="t c" style="left:641px;width:150px;text-align:right;top:506.33px;letter-spacing:0.3px">0.00</div>
<div class="t c" style="left:1136px;top:506.33px;letter-spacing:0.35px">0</div>
<div class="t c" style="left:24px;top:532.60px;letter-spacing:0.1px">DAN002</div>
<div class="t c" style="left:127px;top:532.60px;letter-spacing:0.1px">IT</div>
<div class="t c" style="left:225px;top:532.60px;letter-spacing:0.1px">Dancing Shoes</div>
<div class="t c" style="left:562px;top:532.60px;letter-spacing:0.1px">Durban</div>
<div class="t c" style="left:641px;width:150px;text-align:right;top:532.60px;letter-spacing:0.3px">10,000.00</div>
<div class="t c" style="left:952px;top:532.60px;letter-spacing:0.35px">031 123 4567</div>
<div class="t c" style="left:1136px;top:532.60px;letter-spacing:0.35px">123456789</div>
<div class="t c" style="left:24px;top:558.87px;letter-spacing:0.1px">BIG0001</div>
<div class="t c" style="left:127px;top:558.87px;letter-spacing:0.1px">CO</div>
<div class="t c" style="left:225px;top:558.87px;letter-spacing:0.1px">Big Bargains</div>
<div class="t c" style="left:562px;top:558.87px;letter-spacing:0.1px">Durban</div>
<div class="t c" style="left:641px;width:150px;text-align:right;top:558.87px;letter-spacing:0.3px">10,000.00</div>
<div class="t c" style="left:952px;top:558.87px;letter-spacing:0.35px">031 456 7897</div>
<div class="t c" style="left:1136px;top:558.87px;letter-spacing:0.35px">123456789</div>
<div class="t c" style="left:24px;top:585.14px;letter-spacing:0.1px">MAN0001</div>
<div class="t c" style="left:127px;top:585.14px;letter-spacing:0.1px">RE</div>
<div class="t c" style="left:225px;top:585.14px;letter-spacing:0.1px">Mandy Norton</div>
<div class="t c" style="left:562px;top:585.14px;letter-spacing:0.1px">Durban</div>
<div class="t c" style="left:641px;width:150px;text-align:right;top:585.14px;letter-spacing:0.3px">0.00</div>
<div class="t c" style="left:1136px;top:585.14px;letter-spacing:0.35px">0</div>
<div style="left:19px;top:0;width:1px;height:600px;background:#d6d7db"></div>
<div style="left:122px;top:0;width:1px;height:600px;background:#d6d7db"></div>
<div style="left:219px;top:0;width:1px;height:600px;background:#d6d7db"></div>
<div style="left:394px;top:0;width:1px;height:600px;background:#d6d7db"></div>
<div style="left:482px;top:0;width:1px;height:600px;background:#d6d7db"></div>
<div style="left:557px;top:0;width:1px;height:600px;background:#d6d7db"></div>
<div style="left:659px;top:0;width:1px;height:600px;background:#d6d7db"></div>
<div style="left:796px;top:0;width:1px;height:600px;background:#d6d7db"></div>
<div style="left:947px;top:0;width:1px;height:600px;background:#d6d7db"></div>
<div style="left:1131px;top:0;width:1px;height:600px;background:#d6d7db"></div>
</div>
<div style="left:1464px;top:245px;width:21px;height:618px;background:#f6f6f8"></div>
<svg style="left:1470px;top:252px" width="10" height="6"><polygon points="0,5.5 9,5.5 4.5,0.5" fill="#85878f"/></svg>
<svg style="left:1470px;top:851px" width="10" height="6"><polygon points="0,0.5 9,0.5 4.5,5.5" fill="#85878f"/></svg>
<div style="left:1470px;top:267px;width:10px;height:238px;border:1px solid #a9abb3;border-radius:5px;background:linear-gradient(90deg,#f4f4f6,#e4e5e9)"></div>
<div style="left:200px;top:863px;width:1285px;height:22px;background:#f6f6f8"></div>
<svg style="left:207px;top:870px" width="6" height="10"><polygon points="5.5,0 5.5,9 0.5,4.5" fill="#85878f"/></svg>
<svg style="left:1450px;top:870px" width="6" height="10"><polygon points="0.5,0 0.5,9 5.5,4.5" fill="#85878f"/></svg>
<div style="left:222px;top:871px;width:325px;height:9px;border:1px solid #a9abb3;border-radius:5px;background:linear-gradient(#f4f4f6,#e4e5e9)"></div>
<div style="left:2px;top:887px;width:1488px;height:36px;background:linear-gradient(#dcdde1,#d3d4d9 40%,#cccdd2);border-bottom:1px solid #e0e1e5"></div>
<div class="t sb" style="left:14px;top:898px">Open Windows</div>
<svg style="left:109px;top:902px" width="9" height="5"><polygon points="0,0 8,0 4,4.5" fill="#3c3f4e"/></svg>
<div style="left:1000px;top:892px;width:1px;height:26px;background:#b4b5bc;box-shadow:1px 0 0 #e4e5e9"></div>
<div style="left:1117px;top:892px;width:1px;height:26px;background:#b4b5bc;box-shadow:1px 0 0 #e4e5e9"></div>
<div style="left:1208px;top:892px;width:1px;height:26px;background:#b4b5bc;box-shadow:1px 0 0 #e4e5e9"></div>
<div style="left:1331px;top:892px;width:1px;height:26px;background:#b4b5bc;box-shadow:1px 0 0 #e4e5e9"></div>
<div class="t sb" style="left:1012px;top:898px">User : JulandaK</div>
<div class="t sb" style="left:1128px;top:898px">10/02/2021</div>
<div class="t sb" style="left:1218px;top:898px">Version : 2.5.0.0</div>
<div class="t sb" style="left:1341px;top:898px">Example Company</div>
<svg style="left:1470px;top:905px" width="14" height="14"><path d="M13 3 L3 13 M13 8 L8 13 M13 12 L12 13" stroke="#9a9ca4" stroke-width="1.3"/></svg>
<div style="left:198px;top:301px;width:22px;height:26.5px;border:3px solid #3e63dc"></div>
<svg style="left:205px;top:308px" width="7" height="11"><polygon points="1,0.5 6,5.5 1,10.5" fill="#1b1b22"/></svg>
<div style="left:19px;top:787px;width:172px;height:86px;border:3.5px solid #3e63dc"></div>
<div style="left:22.5px;top:790.5px;width:165px;height:79px;border:2px solid #e6f3f6"></div>
<svg style="left:0;top:0" width="1492" height="925"><polygon points="383.1,24.2 516.1,18.2 516.0,15.2 382.9,19.8" fill="#3e63dc"/><polygon points="534.0,16.0 516.3,23.7 515.7,9.7" fill="#3e63dc"/></svg>
<svg style="left:0;top:0" width="1492" height="925"><polygon points="1013.8,182.7 978.2,135.1 975.4,137.2 1010.2,185.3" fill="#3e63dc"/><polygon points="965.0,120.0 984.1,130.8 969.6,141.4" fill="#3e63dc"/></svg>
<svg style="left:0;top:0" width="1492" height="925"><polygon points="206.8,212.0 207.0,276.0 211.0,276.0 211.2,212.0" fill="#3e63dc"/><polygon points="209.0,297.0 201.0,276.0 217.0,276.0" fill="#3e63dc"/></svg>
<svg style="left:0;top:0" width="1492" height="925"><polygon points="645.7,750.0 216.3,821.2 217.1,825.9 646.3,754.0" fill="#3e63dc"/><polygon points="196.0,827.0 215.4,815.9 218.0,831.2" fill="#3e63dc"/></svg>
<div style="left:355px;top:9px;width:28px;height:28px;border-radius:50%;background:#3e63dc"></div><div class="t" style="left:359px;width:20px;text-align:center;top:15.5px;font-size:13px;color:#0c1030">1</div>
<div style="left:1006px;top:182px;width:32px;height:32px;border-radius:50%;background:#3e63dc"></div><div class="t" style="left:1012px;width:20px;text-align:center;top:190.5px;font-size:13px;color:#0c1030">2</div>
<div style="left:193px;top:182px;width:32px;height:32px;border-radius:50%;background:#3e63dc"></div><div class="t" style="left:199px;width:20px;text-align:center;top:190.5px;font-size:13px;color:#0c1030">3</div>
<div style="left:645px;top:733px;width:32px;height:32px;border-radius:50%;background:#3e63dc"></div><div class="t" style="left:651px;width:20px;text-align:center;top:741.5px;font-size:13px;color:#0c1030">4</div>
</body></html>
